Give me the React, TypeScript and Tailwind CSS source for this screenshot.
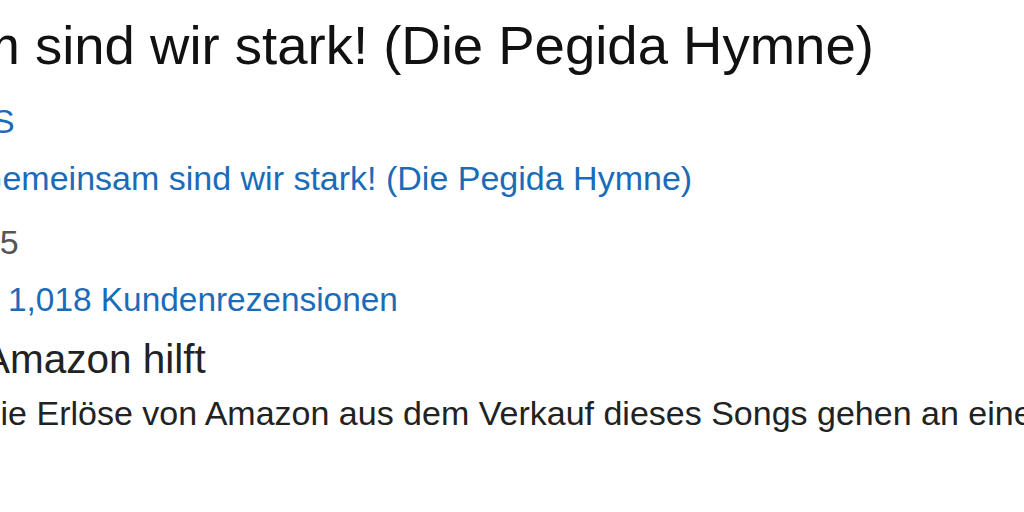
import React from "react";

export default function App() {
  return (
    <div
      className="w-[1024px] h-[512px] overflow-hidden bg-white"
      style={{ fontFamily: '"Liberation Sans", Arial, sans-serif' }}
    >
      <div className="flex flex-col pt-[14px] whitespace-nowrap">
        <h1 className="ml-[-274px] text-[54.5px] leading-[64px] font-normal text-[#111111]">
          Gemeinsam sind wir stark! (Die Pegida Hymne)
        </h1>
        <a className="mt-[23px] ml-[-8px] text-[34px] leading-[40px] text-[#1a6cb8]">S</a>
        <a className="mt-[17px] ml-[-24px] text-[34px] leading-[40px] text-[#1a6cb8]">
          Gemeinsam sind wir stark! (Die Pegida Hymne)
        </a>
        <div className="mt-[24px] ml-[-57px] text-[34px] leading-[40px] text-[#555555]">2015</div>
        <a className="mt-[18px] ml-[8px] text-[33.4px] leading-[40px] text-[#1a6cb8]">
          1,018 Kundenrezensionen
        </a>
        <h2 className="mt-[16px] ml-[-17px] text-[40.5px] leading-[46px] font-normal text-[#222222]">
          Amazon hilft
        </h2>
        <p className="mt-[11px] ml-[-24px] text-[34px] leading-[40px] text-[#222222]">
          Die Erlöse von Amazon aus dem Verkauf dieses Songs gehen an eine gemeinnützige Organisation.
        </p>
      </div>
    </div>
  );
}
